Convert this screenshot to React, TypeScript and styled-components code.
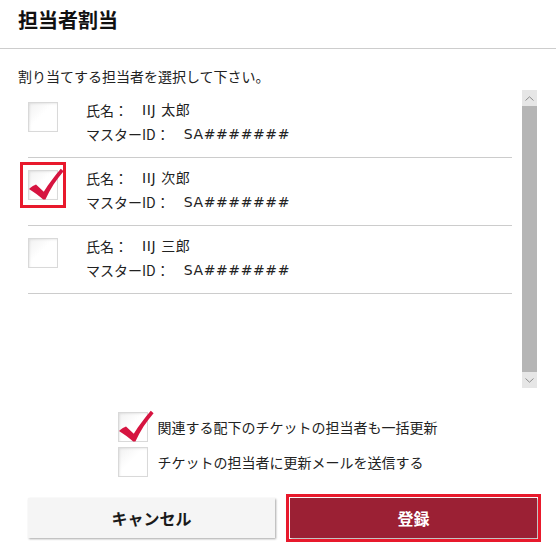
import React from 'react';
import styled, { createGlobalStyle } from 'styled-components';

const GlobalStyle = createGlobalStyle`
  html, body { margin: 0; padding: 0; background: #fff; }
  body {
    font-family: "Noto Sans CJK JP", "Noto Sans", sans-serif;
    color: #222;
  }
  * { box-sizing: border-box; }
`;

const Dialog = styled.div`
  width: 556px;
  height: 560px;
  display: flex;
  flex-direction: column;
  background: #fff;
`;

const Header = styled.header`
  height: 49px;
  border-bottom: 1px solid #cdcdcd;
  padding: 6px 18px 0;
`;

const Title = styled.h1`
  margin: 0;
  font-size: 20px;
  line-height: 28px;
  font-weight: 700;
  color: #111;
`;

const Body = styled.div`
  display: flex;
  flex-direction: column;
  padding: 0 19px 0 18px;
`;

const Instruction = styled.p`
  margin: 17px 0 0;
  font-size: 14px;
  line-height: 20px;
  color: #222;
`;

const ListFrame = styled.div`
  margin: 4px 0 0 10px;
  height: 298px;
  display: flex;
  gap: 10px;
`;

const List = styled.div`
  flex: 1;
  display: flex;
  flex-direction: column;
`;

const Row = styled.div`
  display: flex;
  gap: 28px;
  padding: 8px 0 11px;
  border-bottom: 1px solid #cccccc;
`;

const Box = styled.span<{ $focused?: boolean }>`
  position: relative;
  flex: none;
  display: block;
  width: 30px;
  height: 30px;
  margin-top: 4px;
  border: 1px solid #d9d9d9;
  background: linear-gradient(135deg, #f1f1f1 0%, #ffffff 45%, #ffffff 100%);
  box-shadow: inset 1px 1px 2px rgba(0, 0, 0, 0.08);
  outline: ${(p) => (p.$focused ? '3px solid #e8192c' : 'none')};
  outline-offset: 5px;
`;

const CheckSvg = styled.svg`
  position: absolute;
  left: -2px;
  top: -4px;
  overflow: visible;
`;

const Info = styled.div`
  display: flex;
  flex-direction: column;
  font-size: 14px;
  line-height: 24px;
`;

const Line = styled.div`
  display: flex;
  white-space: nowrap;
`;

const Label = styled.span`
  margin-right: 14px;
`;

const Value = styled.span`
  font-family: "DejaVu Sans", "Noto Sans CJK JP", sans-serif;
  font-size: 14px;
  letter-spacing: 0.6px;
`;

const Scrollbar = styled.div`
  width: 15px;
  flex: none;
  display: flex;
  flex-direction: column;
  background: #e6e6e6;
`;

const ScrollButton = styled.div`
  height: 16px;
  display: flex;
  align-items: center;
  justify-content: center;
  background: #e6e6e6;
`;

const Thumb = styled.div`
  flex: 1;
  background: #b5b5b5;
`;

const Options = styled.div`
  align-self: center;
  margin-top: 24px;
  display: flex;
  flex-direction: column;
  gap: 5px;
`;

const Option = styled.label`
  display: flex;
  align-items: center;
  gap: 10px;
  font-size: 14px;
  line-height: 20px;
  color: #222;
  & > span:first-child { margin-top: 0; }
`;

const Buttons = styled.div`
  display: flex;
  gap: 15px;
  margin: 21px 0 0 10px;
`;

const Button = styled.button<{ $primary?: boolean }>`
  flex: 1;
  height: 40px;
  border: none;
  font-family: "Noto Sans CJK JP", sans-serif;
  font-size: 16px;
  font-weight: 700;
  color: ${(p) => (p.$primary ? '#ffffff' : '#1a1a1a')};
  background: ${(p) => (p.$primary ? '#9b2034' : '#f5f5f5')};
  box-shadow: 1px 1px 2px rgba(0, 0, 0, 0.35);
  outline: ${(p) => (p.$primary ? '3px solid #e8192c' : 'none')};
  outline-offset: 1px;
`;

const Check = () => (
  <CheckSvg width="38" height="34" viewBox="-2 -4 38 34">
    <path
      d="M0 18 C3 15.5 5 14.2 7 13.5 L14.8 20.8 C20 12.5 26 4.5 31.8 -2.2 L34.6 0.2 C27.5 8.5 21 18 16.4 28.6 L14.2 28.6 C10 25 5 21 0 18 Z"
      fill="#d61440"
    />
  </CheckSvg>
);

const CheckBox = ({ checked, focused }: { checked?: boolean; focused?: boolean }) => (
  <Box $focused={focused}>{checked && <Check />}</Box>
);

const Chevron = ({ up }: { up?: boolean }) => (
  <svg width="9" height="5" viewBox="0 0 9 5">
    <polyline
      points={up ? '0.5,4.5 4.5,0.8 8.5,4.5' : '0.5,0.5 4.5,4.2 8.5,0.5'}
      fill="none"
      stroke="#8e8e8e"
      strokeWidth="1"
    />
  </svg>
);

const people = [
  { name: 'IIJ 太郎', id: 'SA#######', checked: false },
  { name: 'IIJ 次郎', id: 'SA#######', checked: true },
  { name: 'IIJ 三郎', id: 'SA#######', checked: false },
];

export default function App() {
  return (
    <Dialog>
      <GlobalStyle />
      <Header>
        <Title>担当者割当</Title>
      </Header>
      <Body>
        <Instruction>割り当てする担当者を選択して下さい。</Instruction>
        <ListFrame>
          <List>
            {people.map((p) => (
              <Row key={p.name}>
                <CheckBox checked={p.checked} focused={p.checked} />
                <Info>
                  <Line>
                    <Label>氏名：</Label>
                    <Value>{p.name}</Value>
                  </Line>
                  <Line>
                    <Label>マスターID：</Label>
                    <Value>{p.id}</Value>
                  </Line>
                </Info>
              </Row>
            ))}
          </List>
          <Scrollbar>
            <ScrollButton>
              <Chevron up />
            </ScrollButton>
            <Thumb />
            <ScrollButton>
              <Chevron />
            </ScrollButton>
          </Scrollbar>
        </ListFrame>
        <Options>
          <Option>
            <CheckBox checked />
            関連する配下のチケットの担当者も一括更新
          </Option>
          <Option>
            <CheckBox />
            チケットの担当者に更新メールを送信する
          </Option>
        </Options>
        <Buttons>
          <Button>キャンセル</Button>
          <Button $primary>登録</Button>
        </Buttons>
      </Body>
    </Dialog>
  );
}
